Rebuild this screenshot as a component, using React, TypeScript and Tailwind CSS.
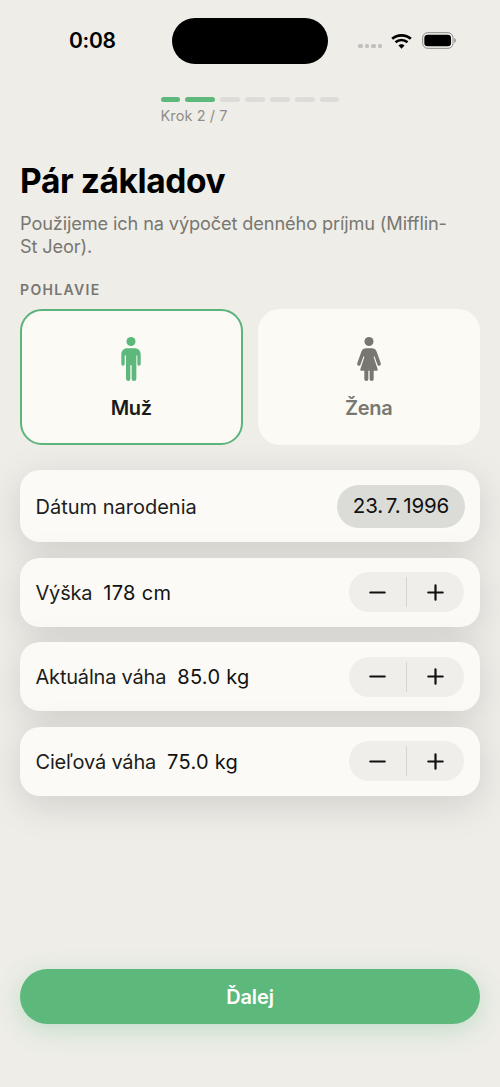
import React, { useState } from 'react';

type Sex = 'male' | 'female';

const TOTAL_STEPS = 7;
const STEP = 2;

function StatusBar() {
  return (
    <div className="h-[82px] pt-[17.500px] pl-[69px] flex items-start">
      <div className="w-[103px] h-[47px] shrink-0 flex items-center text-[21px] font-semibold tracking-[-0.3px] text-black">0:08</div>
      <div className="w-[156px] h-[46px] shrink-0 rounded-full bg-black" />
      <div className="ml-[30px] h-[46px] shrink-0 flex items-center">
        <div className="flex gap-[2px] mt-[11px]">
          {[...Array(4)].map((_, i) => (
            <div key={i} className="w-[4.6px] h-[4.6px] rounded-[1.5px] bg-[#c2c1bd]" />
          ))}
        </div>
        <svg className="ml-[9px] w-[21px] h-[16px]" viewBox="0 0 63 48" fill="none">
          <path d="M3.500 17.500C19 3.500 44 3.500 59.500 17.500" stroke="#000" strokeWidth="8" />
          <path d="M13.500 28C24 18.500 39 18.500 49.500 28" stroke="#000" strokeWidth="8" />
          <path d="M22.500 37.500C27 32.500 36 32.500 40.500 37.500L31.500 47Z" fill="#000" />
        </svg>
        <svg className="ml-[9.500px] w-[35px] h-[17px]" viewBox="0 0 105 51">
          <rect x="2" y="2" width="91" height="47" rx="15" fill="none" stroke="#8e8d8a" strokeWidth="3" />
          <rect x="7" y="8" width="80" height="35" rx="10" fill="#000" />
          <path d="M97 18C103 20 103 31 97 33Z" fill="#8e8d8a" />
        </svg>
      </div>
    </div>
  );
}

function MaleIcon() {
  return (
    <svg className="w-5 h-11" viewBox="0 0 60 132" fill="currentColor">
      <circle cx="30" cy="13.500" r="13.500" />
      <path d="M19 34H41C52 34 59 42 59 53V81Q59 86 54 86T49 81V57Q49 55 47.500 55T46 57V126Q46 132 39 132T32 126V86Q32 84 30 84T28 86V126Q28 132 22 132T15 126V57Q15 55 13 55T11 57V81Q11 86 6 86T1 81V53C1 42 8 34 19 34Z" />
    </svg>
  );
}

function FemaleIcon() {
  return (
    <svg className="w-6 h-11" viewBox="0 0 72 132" fill="currentColor">
      <circle cx="36" cy="13.500" r="13.500" />
      <path d="M28 34H44C52 34 56 37 59 44L71 78Q73 84 68 86T61 82L53 59Q52 57 51 58L50 60L62 97Q63 101 59 101H50V127Q50 132 44 132T38 127V101H34V127Q34 132 28 132T22 127V101H13Q9 101 10 97L22 60L21 58Q20 57 19 59L11 82Q9 88 4 86T1 78L13 44C16 37 20 34 28 34Z" />
    </svg>
  );
}

function SexCard({ active, label, onClick, children }: { active: boolean; label: string; onClick: () => void; children: React.ReactNode }) {
  return (
    <button onClick={onClick}
      className={`flex-1 h-[136px] rounded-[22px] border-[2.500px] bg-[#fbfaf5] flex flex-col items-center justify-start pt-[26px] ${active ? 'border-[#5cb37b]' : 'border-[#fbfaf5]'}`}>
      <span className={`h-11 ${active ? 'text-[#5cb87b]' : 'text-[#787771]'}`}>{children}</span>
      <span className={`mt-[14px] text-[20px] leading-[26px] font-semibold tracking-[-0.3px] ${active ? 'text-[#1a1a18]' : 'text-[#787771]'}`}>{label}</span>
    </button>
  );
}

function Stepper({ onChange }: { onChange: (delta: number) => void }) {
  return (
    <div className="w-[115px] h-[40px] rounded-full bg-[#efeeeb] flex items-center">
      <button onClick={() => onChange(-1)} className="flex-1 h-full flex items-center justify-center">
        <svg className="w-[17px] h-[17px]" viewBox="0 0 17 17" stroke="#111" strokeWidth="2.200" strokeLinecap="round"><path d="M1.300 8.500H15.700" /></svg>
      </button>
      <div className="w-px h-[30px] bg-[#d6d5d2]" />
      <button onClick={() => onChange(1)} className="flex-1 h-full flex items-center justify-center">
        <svg className="w-[17px] h-[17px]" viewBox="0 0 17 17" stroke="#111" strokeWidth="2.200" strokeLinecap="round"><path d="M1.300 8.500H15.700M8.500 1.300V15.700" /></svg>
      </button>
    </div>
  );
}

function Row({ label, value, className = 'h-[69px] pr-[16px]', children }: { label: string; value?: string; className?: string; children: React.ReactNode }) {
  return (
    <div className={`${className} rounded-[20px] bg-[#fbfaf6] pl-[15.500px] flex items-center justify-between shadow-[0_9px_38px_rgba(0,0,0,0.13)]`}>
      <div className="flex gap-[11px] pt-px text-[20px] text-[#1d1d1b]">
        <span className={value ? 'tracking-[-0.2px]' : 'tracking-[0px]'}>{label}</span>
        {value && <span className="text-[#111] tracking-[0.3px]">{value}</span>}
      </div>
      {children}
    </div>
  );
}

export default function App() {
  const [sex, setSex] = useState<Sex>('male');
  const [height, setHeight] = useState(178);
  const [weight, setWeight] = useState(85);
  const [target, setTarget] = useState(75);

  return (
    <div className="w-[500px] h-[1087px] bg-[#eeede8] overflow-hidden flex flex-col font-['Inter',sans-serif]">
      <StatusBar />

      {/* Progress */}
      <div className="w-[179px] ml-[160.500px] pt-[15px]">
        <div className="flex gap-[5px]">
          {[...Array(TOTAL_STEPS)].map((_, i) => (
            <div key={i} className={`h-[5px] rounded-full ${i === STEP - 1 ? 'w-[30px]' : 'flex-1'} ${i < STEP ? 'bg-[#5cb87b]' : 'bg-[#dddcd8]'}`} />
          ))}
        </div>
        <p className="mt-[5px] text-[14.500px] leading-[18px] tracking-[0.1px] text-[#8f8e89]">Krok {STEP} / {TOTAL_STEPS}</p>
      </div>

      <div className="px-5 pt-[35px] flex-1 flex flex-col">
        <h1 className="text-[33.500px] leading-[42px] font-bold tracking-[-0.4px] text-black">Pár základov</h1>
        <p className="mt-[10px] text-[18.200px] leading-[22.500px] tracking-[-0.13px] text-[#787771]">
          Použijeme ich na výpočet denného príjmu (Mifflin-<br />St Jeor).
        </p>

        <h2 className="mt-[24px] text-[14px] leading-[18px] font-semibold tracking-[1.35px] text-[#787771]">POHLAVIE</h2>
        <div className="mt-[10px] flex gap-[15px]">
          <SexCard active={sex === 'male'} label="Muž" onClick={() => setSex('male')}><MaleIcon /></SexCard>
          <SexCard active={sex === 'female'} label="Žena" onClick={() => setSex('female')}><FemaleIcon /></SexCard>
        </div>

        {/* Measurements */}
        <div className="mt-[25px] flex flex-col gap-[15.500px]">
          <Row label="Dátum narodenia" className="h-[72px] pr-[15px]">
            <div className="w-[128px] h-[43px] rounded-full bg-[#dbdcd8] flex items-center justify-center text-[20.500px] tracking-[-0.1px] [word-spacing:-3px] text-[#111]">23. 7. 1996</div>
          </Row>
          <Row label="Výška" value={`${height} cm`}>
            <Stepper onChange={(d) => setHeight(height + d)} />
          </Row>
          <Row label="Aktuálna váha" value={`${weight.toFixed(1)} kg`}>
            <Stepper onChange={(d) => setWeight(weight + d * 0.5)} />
          </Row>
          <Row label="Cieľová váha" value={`${target.toFixed(1)} kg`}>
            <Stepper onChange={(d) => setTarget(target + d * 0.5)} />
          </Row>
        </div>

        <button className="mt-auto mb-[63px] h-[55px] shrink-0 rounded-full bg-[#5cb87b] text-white text-[20px] font-semibold tracking-[-0.1px] shadow-[0_6px_24px_rgba(92,184,123,0.3)]">
          Ďalej
        </button>
      </div>
    </div>
  );
}
